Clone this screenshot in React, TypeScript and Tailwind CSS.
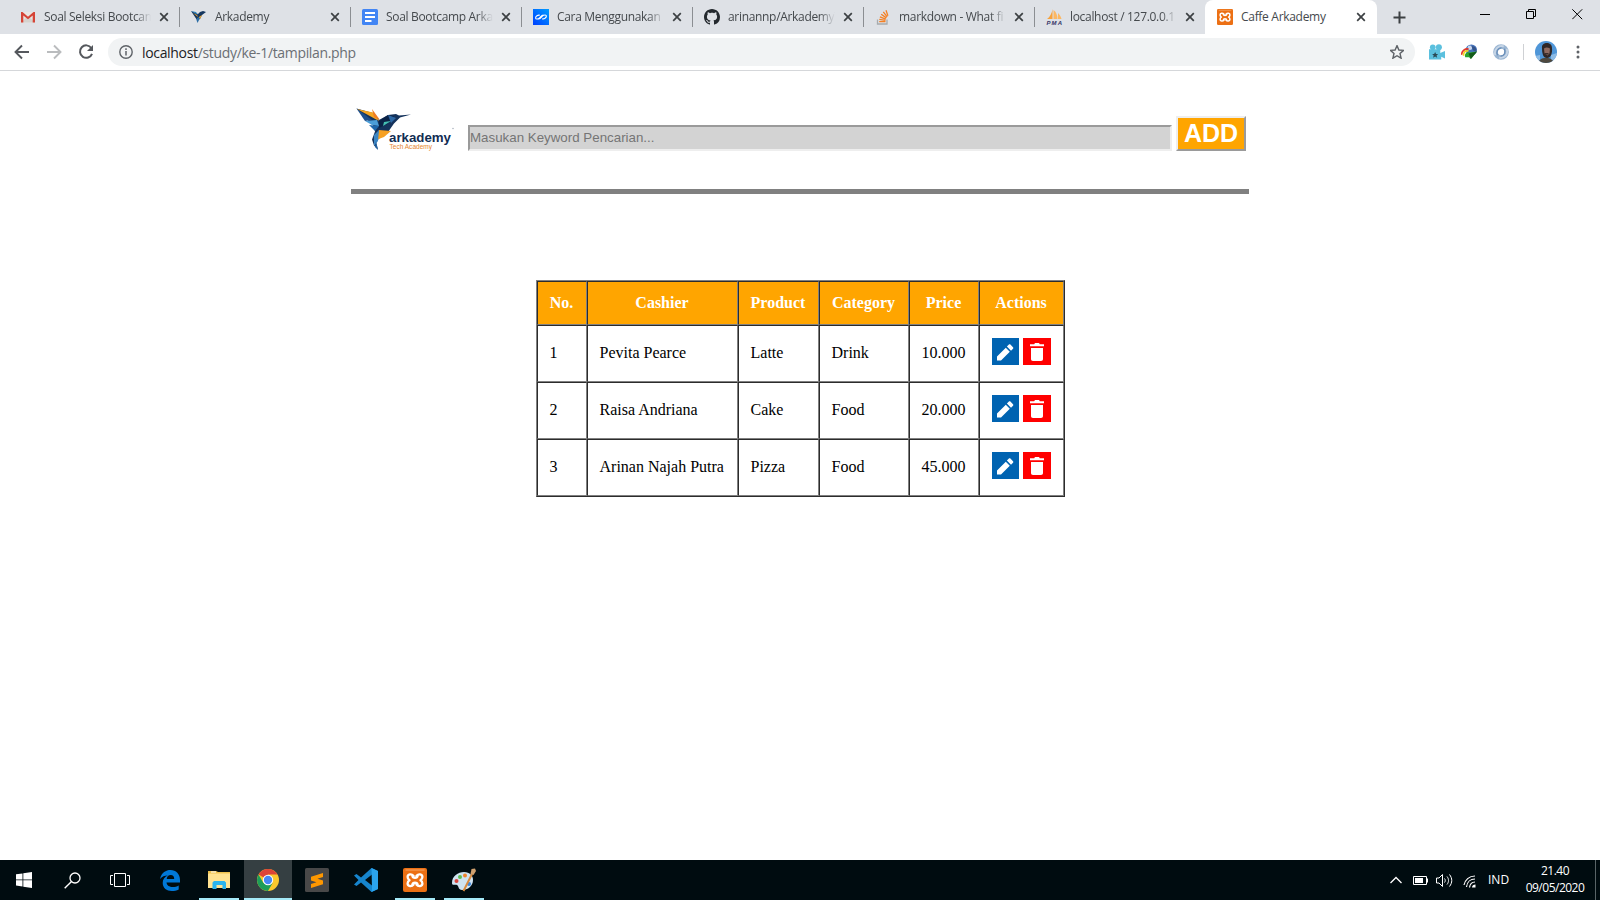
import React from "react";

const Gmail = () => (
  <svg width="16" height="16" viewBox="0 0 16 16">
    <path d="M1 3h14v10.500H1z" fill="#e8e6e3" />
    <path d="M1 13.500 8 7l7 6.500z" fill="#d5d2ce" />
    <path d="M1 13.500V3h1.500L8 7.800 13.500 3H15v10.500h-2.300V6.400L8 10.300 3.300 6.400v7.100z" fill="#d54437" />
  </svg>
);
const Bird = () => (
  <svg width="16" height="16" viewBox="0 0 16 16">
    <path d="M0 2 7 5 9 3 12 2 15 3 11 6 9 10 6 11z" fill="#14365f" />
    <path d="M0 2 5 3 7 6z" fill="#2d83bd" />
    <path d="M2 4 6 6 7 8z" fill="#f5a623" />
    <path d="M6 9 10 7 8 11 6.500 14 5.500 11z" fill="#2a6ca5" />
    <path d="M8 8 11 6 9 10z" fill="#f5a623" />
  </svg>
);
const Docs = () => (
  <svg width="16" height="16" viewBox="0 0 16 16">
    <rect width="16" height="16" rx="1.500" fill="#4285f4" />
    <path d="M3 4h10M3 8h10M3 12h6.500" stroke="#fff" strokeWidth="1.900" />
  </svg>
);
const Wave = () => (
  <svg width="16" height="16" viewBox="0 0 16 16">
    <defs>
      <linearGradient id="wv" x1="0" y1="1" x2="1" y2="0">
        <stop offset="0" stopColor="#0040ff" />
        <stop offset="1" stopColor="#009dff" />
      </linearGradient>
    </defs>
    <rect width="16" height="16" fill="url(#wv)" />
    <path d="M6.800 6.300C5 5.500 2.500 7.500 2.600 9s2.600 1.300 4-.200S9 5.800 10.500 6M9.200 9.700c1.800.800 4.300-1.200 4.200-2.700s-2.600-1.300-4 .200S7 10.200 5.500 10" fill="none" stroke="#fff" strokeWidth="1.100" />
  </svg>
);
const Github = () => (
  <svg width="16" height="16" viewBox="0 0 16 16">
    <path fill="#24292e" d="M8 0C3.580 0 0 3.580 0 8c0 3.540 2.290 6.530 5.470 7.590.4.070.55-.17.55-.38 0-.19-.01-.82-.01-1.490-2.010.37-2.530-.49-2.690-.94-.09-.23-.48-.94-.82-1.130-.28-.15-.68-.52-.01-.53.63-.01 1.080.58 1.230.82.72 1.210 1.870.87 2.330.66.07-.52.28-.87.51-1.070-1.780-.2-3.640-.89-3.640-3.950 0-.87.31-1.590.82-2.150-.08-.2-.36-1.020.08-2.120 0 0 .67-.21 2.200.82.64-.18 1.320-.27 2-.27s1.360.09 2 .27c1.530-1.040 2.200-.82 2.200-.82.44 1.100.16 1.920.08 2.120.51.56.82 1.270.82 2.150 0 3.070-1.870 3.750-3.650 3.950.29.25.54.73.54 1.480 0 1.070-.01 1.930-.01 2.200 0 .21.15.46.55.38A8.010 8.010 0 0 0 16 8c0-4.420-3.580-8-8-8z" />
  </svg>
);
const Stack = () => (
  <svg width="16" height="16" viewBox="0 0 16 16">
    <path d="M2.500 10.500V15H12v-4.500" fill="none" stroke="#a7abae" strokeWidth="1.300" />
    <path d="M4.200 12.700h6.300M4.300 10.300l6.200 1M4.900 7.800l5.900 2.300M6.200 5.200l5.200 3.700M8.300 2.900l3.900 5M11 1.200l1.900 5.600" stroke="#f48024" strokeWidth="1.300" />
  </svg>
);
const Pma = () => (
  <svg width="17" height="16" viewBox="0 0 17 16">
    <path d="M6.500 0v10H1C4 8 6 4 6.500 0z" fill="#f7a23b" />
    <path d="M7.500 1c3 2 4 6 4 9H7.500zM12 4c2 2 3 4 3.500 6H12z" fill="#fcb864" />
    <text x="0.500" y="15.500" fontSize="6" fontStyle="italic" fontWeight="700" textLength="15.500" fontFamily="Liberation Sans, sans-serif" fill="#343566">PMA</text>
  </svg>
);
const Xampp = ({ s = 16 }: { s?: number }) => (
  <svg width={s} height={s} viewBox="0 0 24 24">
    <rect width="24" height="24" rx="2" fill="#ec7014" />
    <path d="M2.500 2h19" stroke="#f7a768" strokeWidth="1" />
    <path d="M10.500 7.800C8.500 5.600 4.600 6 4.600 9c0 1.800 1.900 3.200 1.900 3.200s-1.900 1-1.900 3.200c0 3.200 4.200 3.400 6 1.100M13.500 7.800c2-2.200 5.900-1.800 5.900 1.200 0 1.800-1.900 3.200-1.900 3.200s1.900 1 1.900 3.200c0 3.200-4.200 3.400-6 1.100M9.300 7.500c.500 3 4.900 3 5.400 0M9.300 17c.500-3 4.900-3 5.400 0" fill="none" stroke="#fff" strokeWidth="2.300" strokeLinejoin="round" strokeLinecap="round" />
  </svg>
);

const Close = () => (
  <svg width="10" height="10" viewBox="0 0 10 10">
    <path d="M1.200 1.200 8.800 8.800M8.800 1.200 1.200 8.800" stroke="#3c4043" strokeWidth="1.700" />
  </svg>
);

const tabs = [
  { t: "Soal Seleksi Bootcam", i: <Gmail /> },
  { t: "Arkademy", i: <Bird /> },
  { t: "Soal Bootcamp Arka", i: <Docs /> },
  { t: "Cara Menggunakan", i: <Wave /> },
  { t: "arinannp/ArkademyT", i: <Github /> },
  { t: "markdown - What fi", i: <Stack /> },
  { t: "localhost / 127.0.0.1", i: <Pma /> },
];

function TabBar() {
  return (
    <div className="flex h-[34px] bg-[#dee1e6] text-[12px] text-[#45494d]">
      <div className="flex w-[1205px] shrink-0 rounded-br-[8px] pl-[9px]">
        {tabs.map((tab, i) => (
          <div key={tab.t} className={i < 6 ? "flex w-[171px] shrink-0 items-center pl-[11px]" : "flex w-[170px] shrink-0 items-center pl-[11px]"}>
            <div className="flex w-6 shrink-0">{tab.i}</div>
            <div className="w-[107px] shrink-0 overflow-hidden whitespace-nowrap tracking-[-0.32px] [mask-image:linear-gradient(to_right,black_85%,transparent)]">{tab.t}</div>
            <div className="ml-[8px] flex w-[20px] shrink-0"><Close /></div>
            {i < 6 && <div className="h-5 w-px shrink-0 bg-[#8b8e92]" />}
          </div>
        ))}
      </div>
      <div className="flex w-[172px] shrink-0 items-center rounded-t-[8px] bg-white pl-3">
        <div className="flex w-6"><Xampp /></div>
        <div className="w-[107px] whitespace-nowrap tracking-[-0.3px]">Caffe Arkademy</div>
        <div className="ml-2 flex"><Close /></div>
      </div>
      <svg className="ml-[16px] mt-[11px]" width="13" height="13" viewBox="0 0 13 13"><path d="M6.500 0.500v12M0.500 6.500h12" stroke="#3c4043" strokeWidth="2" /></svg>
      <div className="ml-auto flex gap-[35px] pr-[17px] pt-[9px]">
        <svg width="11" height="11"><path d="M0 5.500h10" stroke="#000" /></svg>
        <svg width="11" height="11"><path d="M0.500 2.500h7v7h-7zM2.500 2.500v-2h7v7h-2" fill="none" stroke="#000" /></svg>
        <svg width="11" height="11"><path d="M.300.300l9.900 9.900M10.200.300l-9.900 9.900" stroke="#000" /></svg>
      </div>
    </div>
  );
}

function Toolbar() {
  return (
    <div className="flex h-[37px] items-center border-b border-[#d5d7da] bg-white">
      <svg className="ml-[14px]" width="16" height="16" viewBox="0 0 16 16"><path d="M15 8H2M8 1.500 1.500 8 8 14.500" fill="none" stroke="#55585d" strokeWidth="1.900" /></svg>
      <svg className="ml-4" width="16" height="16" viewBox="0 0 16 16"><path d="M1 8h13M8 1.500 14.500 8 8 14.500" fill="none" stroke="#babcbe" strokeWidth="1.900" /></svg>
      <svg className="ml-4" width="16" height="16" viewBox="0 0 16 16"><path d="M13.300 4A6.200 6.200 0 1 0 14 9.800" fill="none" stroke="#55585d" strokeWidth="2" /><path d="M15 1v6H9z" fill="#55585d" /></svg>
      <div className="ml-[14px] flex h-7 w-[1307px] items-center rounded-full bg-[#f1f3f4] pl-[11px] pr-[11px]">
        <svg width="14" height="14" viewBox="0 0 14 14"><circle cx="7" cy="7" r="6.200" fill="none" stroke="#5f6368" strokeWidth="1.400" /><path d="M7 6v4.500M7 3.300v1.600" stroke="#5f6368" strokeWidth="1.500" /></svg>
        <div className="ml-[9px] text-[14px] tracking-[-0.33px] text-[#6b6f74]"><span className="text-[#202124]">localhost</span>/study/ke-1/tampilan.php</div>
        <svg className="ml-auto" width="14" height="14" viewBox="1 1 14 14"><path d="M8 1.600 9.900 6l4.700.400-3.600 3.100 1.100 4.700L8 11.700l-4.100 2.500L5 9.500 1.400 6.400 6.100 6z" fill="none" stroke="#5f6368" strokeWidth="1.400" /></svg>
      </div>
      <svg className="ml-[14px]" width="16" height="16" viewBox="0 0 17 16">
        <circle cx="4" cy="3" r="3" fill="#5bc0de" /><circle cx="10.500" cy="3" r="3.200" fill="#5bc0de" />
        <path d="M0 5h12v4L17 7v8l-4-2v3H0z" fill="#5bc0de" /><path d="m6.500 8 1 2.200h2.200L8 11.800l.700 2.200-2.200-1.300L4.300 14l.700-2.200-1.700-1.600h2.200z" fill="#2b4a55" />
      </svg>
      <svg className="ml-[16px]" width="16" height="16" viewBox="0 0 17 17">
        <circle cx="11" cy="6.500" r="6" fill="#4470b8" /><circle cx="9.500" cy="4" r="2.500" fill="#c8d6ee" /><path d="M11 2c4 0 6 3 5 6l-3-1z" fill="#34548a" />
        <path d="M1 11.500c-1-4 4-7 7-6" fill="none" stroke="#e33b2b" strokeWidth="1.800" /><path d="M2.800 12.500c-.800-4 2.500-6 5.200-5" fill="none" stroke="#f4d61d" strokeWidth="1.800" />
        <path d="M4.500 14C3 10 7 8 9 9l8-1-6.500 8-2-2z" fill="#2aa52e" /><path d="m8 10 9-2-6.500 8z" fill="#155a19" />
      </svg>
      <svg className="ml-[16px]" width="16" height="16" viewBox="0 0 17 17">
        <circle cx="8.500" cy="8.500" r="5.900" fill="none" stroke="#9bb6d3" strokeWidth="4.800" /><path d="M2.500 12C.500 6 6 1 11.500 2.500M14.500 5c2 6-2 10.500-8 9.500" fill="none" stroke="#c6d5e6" strokeWidth="2" /><path d="M5 12c-2-4 0-7.500 4-8M12 5c2 4 0 7.500-4 8" fill="none" stroke="#6c90ba" strokeWidth="1.500" />
      </svg>
      <div className="ml-[14px] h-4 w-px bg-[#cfd1d4]" />
      <svg className="ml-[11px]" width="22" height="22" viewBox="0 0 22 22">
        <defs><clipPath id="av"><circle cx="11" cy="11" r="11" /></clipPath></defs>
        <g clipPath="url(#av)"><path d="M0 0h22v22H0z" fill="#4f96d8" /><path d="M16 14l6-2v10h-6zM0 15l5-1v8H0z" fill="#8dbbe5" /><path d="M3 22c1-3 3-5 8-5s7 2 8 5z" fill="#4e4940" /><path d="M7 7c-1-6 10-7 10 0 .500 5-1 10-5 10s-5-5-5-10z" fill="#2f2727" /><path d="M9 7.500c2-1.500 4-1 6 0l-.500 5-2 2-3-2z" fill="#8e6a60" /><path d="M9.500 12h4v1.500h-4z" fill="#3b2d2b" /></g>
      </svg>
      <svg className="ml-[19px]" width="4" height="14" viewBox="0 0 4 14"><g fill="#5f6368"><circle cx="2" cy="2" r="1.500" /><circle cx="2" cy="7" r="1.500" /><circle cx="2" cy="12" r="1.500" /></g></svg>
    </div>
  );
}

const Logo = () => (
  <svg className="shrink-0" width="100" height="50" viewBox="355 105 100 50">
    <path d="M356.500 108.500 373 113l6 7 9-5 8-1 3 1.500 12-1-11 3-6 6-7 10-8 5-3 4 2 7-4-4-2-6 3-8-1-5z" fill="#15335c" />
    <path d="M356.500 108.500 372 120l-7 1z" fill="#1d4f8c" /><path d="m357 109 16 3.500 6 8.500z" fill="#f4a51f" /><path d="m372 109 8 11-6-3z" fill="#f07c22" />
    <path d="m365 121 12-1 2 6-7-1z" fill="#4c9ed8" /><path d="m369 125 10 1-4 5z" fill="#1f67ab" />
    <path d="m379 121 9-6 6 1-7 8-8 4z" fill="#0b2347" /><path d="m384 122 7-1-8 5z" fill="#46c1b3" /><path d="m388 115 8 3-5 5z" fill="#2d68a5" />
    <path d="m379 130 12 1-7 6-8 3z" fill="#f6a021" /><path d="m374 135 5-5-1 11-4 5z" fill="#3b86c4" /><path d="m376 141 2 9-3-3z" fill="#2062a2" />
    <text x="389" y="142" fontSize="13.500" fontWeight="700" textLength="62" lengthAdjust="spacingAndGlyphs" fontFamily="Liberation Sans, sans-serif" fill="#112c52">arkademy</text>
    <text x="389.500" y="149" fontSize="6.500" textLength="42.500" lengthAdjust="spacingAndGlyphs" fontFamily="Liberation Sans, sans-serif" fill="#e6862c">Tech Academy</text>
    <circle cx="453" cy="128.500" r=".700" fill="#9aa5b3" />
  </svg>
);

const rows = [
  ["1", "Pevita Pearce", "Latte", "Drink", "10.000"],
  ["2", "Raisa Andriana", "Cake", "Food", "20.000"],
  ["3", "Arinan Najah Putra", "Pizza", "Food", "45.000"],
];
const heads = ["No.", "Cashier", "Product", "Category", "Price", "Actions"];

function Page() {
  return (
    <main className="h-[789px] bg-white">
      <header className="mx-auto flex h-[123px] w-[898px] border-b-[5px] border-[#808080] pl-1 pt-[34px]">
        <Logo />
        <input className="ml-[13px] mt-5 h-[26px] w-[704px] border-2 border-b-[#eeeeee] border-l-[#9a9a9a] border-r-[#eeeeee] border-t-[#9a9a9a] bg-[#d3d3d3] pb-[2px] font-['Liberation_Sans',sans-serif] text-[13.33px] placeholder:text-[#757575]" placeholder="Masukan Keyword Pencarian..." />
        <button className="ml-1 mt-[11px] flex h-[35px] w-[70px] items-center justify-center border-2 border-b-[#9a9a9a] border-l-[#eeeeee] border-r-[#9a9a9a] border-t-[#eeeeee] bg-[#ffa500] font-['Liberation_Sans',sans-serif] text-[25px] font-bold text-white">ADD</button>
      </header>
      <table className="ml-[536px] mt-[86px] w-[529px] table-fixed border-separate border-spacing-0 border border-b-[#2c2c2c] border-l-[#808080] border-r-[#2c2c2c] border-t-[#808080] font-['Liberation_Serif',serif] text-[16px] leading-[18px] text-black">
        <colgroup>
          <col className="w-[50px]" /><col className="w-[151px]" /><col className="w-[81px]" /><col className="w-[90px]" /><col className="w-[70px]" /><col className="w-[85px]" />
        </colgroup>
        <thead>
          <tr className="h-11">
            {heads.map((h) => (
              <th key={h} className="whitespace-nowrap border border-b-[#808080] border-l-[#2c2c2c] border-r-[#808080] border-t-[#2c2c2c] bg-[#ffa500] p-0 pr-px text-center font-bold text-white">{h}</th>
            ))}
          </tr>
        </thead>
        <tbody>
          {rows.map((r) => (
            <tr key={r[0]} className="h-[57px]">
              {r.map((c) => (
                <td key={c} className="whitespace-nowrap border border-b-[#808080] border-l-[#2c2c2c] border-r-[#808080] border-t-[#2c2c2c] p-0 pb-[2px] pl-[11.5px]">{c}</td>
              ))}
              <td className="border border-b-[#808080] border-l-[#2c2c2c] border-r-[#808080] border-t-[#2c2c2c] p-0">
                <div className="flex gap-1 pb-1 pl-3">
                  <svg width="27" height="27" viewBox="0 0 27 27"><path d="M0 0h27v27H0z" fill="#0063b1" /><path d="M5 22.500v-4L13.800 9.700l4 4L9 22.500zM14.900 8.600l2-2c.500-.500 1-.500 1.500 0l2.600 2.600c.500.500.500 1 0 1.500l-2 2z" fill="#fff" /></svg>
                  <svg width="28" height="27" viewBox="0 0 28 27"><path d="M0 0h28v27H0z" fill="#f00" /><path d="M7 6.300h4.200l.800-1.200h4l.800 1.200H21v2H7zM8 10h12v11c0 1.300-.700 2-2 2h-8c-1.300 0-2-.700-2-2z" fill="#fff" /></svg>
                </div>
              </td>
            </tr>
          ))}
        </tbody>
      </table>
    </main>
  );
}

const Chrome = () => (
  <svg width="22" height="22" viewBox="0 0 22 22">
    <circle cx="11" cy="11" r="11" fill="#fbc82d" />
    <path d="M11 11 1.500 5.500A11 11 0 0 1 20.500 5.500H11z" fill="#dc4437" />
    <path d="M1.500 5.500A11 11 0 0 0 11 22l4.700-8.300L11 16l-4.700-2.300z" fill="#1c9d58" />
    <circle cx="11" cy="11" r="5.200" fill="#fff" /><circle cx="11" cy="11" r="4.200" fill="#4587f3" />
  </svg>
);

const Slot = ({ children, cls }: { children: React.ReactNode; cls: string }) => (
  <div className={"relative flex h-10 shrink-0 items-center justify-center " + cls}>{children}</div>
);
const Line = () => <div className="absolute bottom-0 h-[2px] w-10 bg-[#a5eaf8]" />;

function Taskbar() {
  return (
    <footer className="flex h-10 bg-[#000c10] text-[12px] text-white">
      <Slot cls="w-12"><svg width="16" height="16" viewBox="0 0 16 16"><path d="M0 2.300 6.500 1.400v6.100H0zM7.300 1.300 16 0v7.500H7.300zM0 8.300h6.500v6.200L0 13.600zM7.300 8.300H16V16l-8.700-1.300z" fill="#fff" /></svg></Slot>
      <Slot cls="w-12"><svg width="17" height="17" viewBox="0 0 17 17"><circle cx="11" cy="6" r="5" fill="none" stroke="#fff" strokeWidth="1.300" /><path d="M7.500 9.500.700 16.300" stroke="#fff" strokeWidth="1.400" /></svg></Slot>
      <Slot cls="w-12"><svg width="20" height="14" viewBox="0 0 20 14"><path d="M4.500.500h11v13h-11zM3 2.500H.500v9H3M17 2.500h2.500v9H17" fill="none" stroke="#fff" /></svg></Slot>
      <Slot cls="w-[52px]"><svg width="20" height="21" viewBox="0 0 20 21"><path d="M0 9C1.500 2.500 6 0 10.500 0 16 0 20 4 20 10v2.500H6.500c.300 3 3 4.500 6.200 4.500 2.300 0 4.300-.500 6-1.500v4c-2 1-4.500 1.500-7 1.500-5 0-9-3-9-8 0-3.500 1.800-6 5-7.500C4.500 5.500 2 6.500 0 9zm6.700 0h7.500c0-2.500-1.200-4-3.500-4S7 6.500 6.700 9z" fill="#0078d7" /></svg></Slot>
      <Slot cls="w-[46px]"><svg width="22" height="18" viewBox="0 0 22 18"><path d="M0 0h8l2 1h12v16H0z" fill="#eec24f" /><path d="M1 2.500h21V17H0V3z" fill="#ffe391" /><path d="M3 1h5" stroke="#fff" /><path d="M4.500 18v-6.500l1.500-1.500h10.500l1.500 1.500V18h-3.500v-4h-6v4z" fill="#2ab4ed" /></svg><Line /></Slot>
      <Slot cls="ml-[2px] w-12 bg-[#353f42]"><Chrome /><div className="absolute bottom-0 h-[2px] w-12 bg-[#a5eaf8]" /></Slot>
      <Slot cls="w-[50px]"><svg width="24" height="24" viewBox="0 0 24 24"><rect width="24" height="24" rx="1.500" fill="#484848" /><path d="M6 8.800 18 5v4l-5.500 1.700L18 12.500v3.800L6 20v-4l5.500-1.700L6 12.500z" fill="#ff9800" /></svg></Slot>
      <Slot cls="w-12"><svg width="24" height="24" viewBox="0 0 24 24"><path d="M17.500 0 24 3v18l-6.500 3L7 14.500 2.500 18 0 16.500 4.500 12 0 7.500 2.500 6 7 9.500zM18 6.500 11 12l7 5.500z" fill="#1685cd" /><path d="M17.500 0 24 3v18l-6.500 3 .500-3z" fill="#2ba4ee" /></svg></Slot>
      <Slot cls="w-[50px]"><Xampp s={24} /><Line /></Slot>
      <Slot cls="w-12"><svg width="24" height="24" viewBox="0 0 24 24"><path d="M0 15C0 8 6 4 12 4c6 0 9 4 9 8 0 6-5 10-11 10-4 0-3-4-5-5s-5 1-5-2z" fill="#cfe3f1" /><circle cx="4.500" cy="13" r="2" fill="#d8453c" /><circle cx="8" cy="9" r="2" fill="#5ebd52" /><circle cx="13" cy="7.500" r="2" fill="#f0832b" /><circle cx="17" cy="16" r="2" fill="#3a87dc" /><path d="M20 6 11.500 23" stroke="#d88a3e" strokeWidth="2" /><path d="m18.500 6 1-5L23 .500 24 3l-2.500 4z" fill="#cfa06e" /></svg><Line /></Slot>
      <div className="ml-auto flex items-center">
        <svg width="12" height="8" viewBox="0 0 12 8"><path d="m.500 7 5.500-5.500L11.500 7" fill="none" stroke="#fff" strokeWidth="1.300" /></svg>
        <svg className="ml-[11px]" width="15" height="9" viewBox="0 0 15 9"><path d="M.500.500h13v8H.500zM14.500 2.500v4" fill="none" stroke="#fff" /><path d="M2 2h8v5H2z" fill="#fff" /></svg>
        <svg className="ml-2" width="17" height="15" viewBox="0 0 17 15"><path d="M.500 5v5h2.500l3.500 3.500v-12L3 5z" fill="none" stroke="#fff" /><path d="M8.500 5.500c1 1.300 1 2.700 0 4M11 3.500c2 2.500 2 5.500 0 8M13.500 1.500c3 4 3 8 0 12" fill="none" stroke="#fff" /></svg>
        <svg className="ml-[10px] mt-[2px]" width="13" height="13" viewBox="0 0 13 13"><path d="M1 10C2 5 6 1 12 1M3.500 12C4 7 7.500 4 12 4M6.500 12.500C7 9 9 7 12 7" fill="none" stroke="#fff" strokeWidth="1.200" /><path d="M9 12.500c0-2 1.500-3 3.500-3v3z" fill="#fff" /></svg>
        <div className="ml-[12px] w-[37px]">IND</div>
        <div className="w-[60px] pb-[2px] text-center leading-[17px] tracking-[-0.5px]"><div>21.40</div><div>09/05/2020</div></div>
        <div className="ml-[10px] mr-1 h-10 w-px bg-[#596467]" />
      </div>
    </footer>
  );
}

export default function App() {
  return (
    <div className="flex h-[900px] w-[1600px] flex-col overflow-hidden bg-white font-['Open_Sans','Noto_Sans',sans-serif]">
      <TabBar />
      <Toolbar />
      <Page />
      <Taskbar />
    </div>
  );
}
